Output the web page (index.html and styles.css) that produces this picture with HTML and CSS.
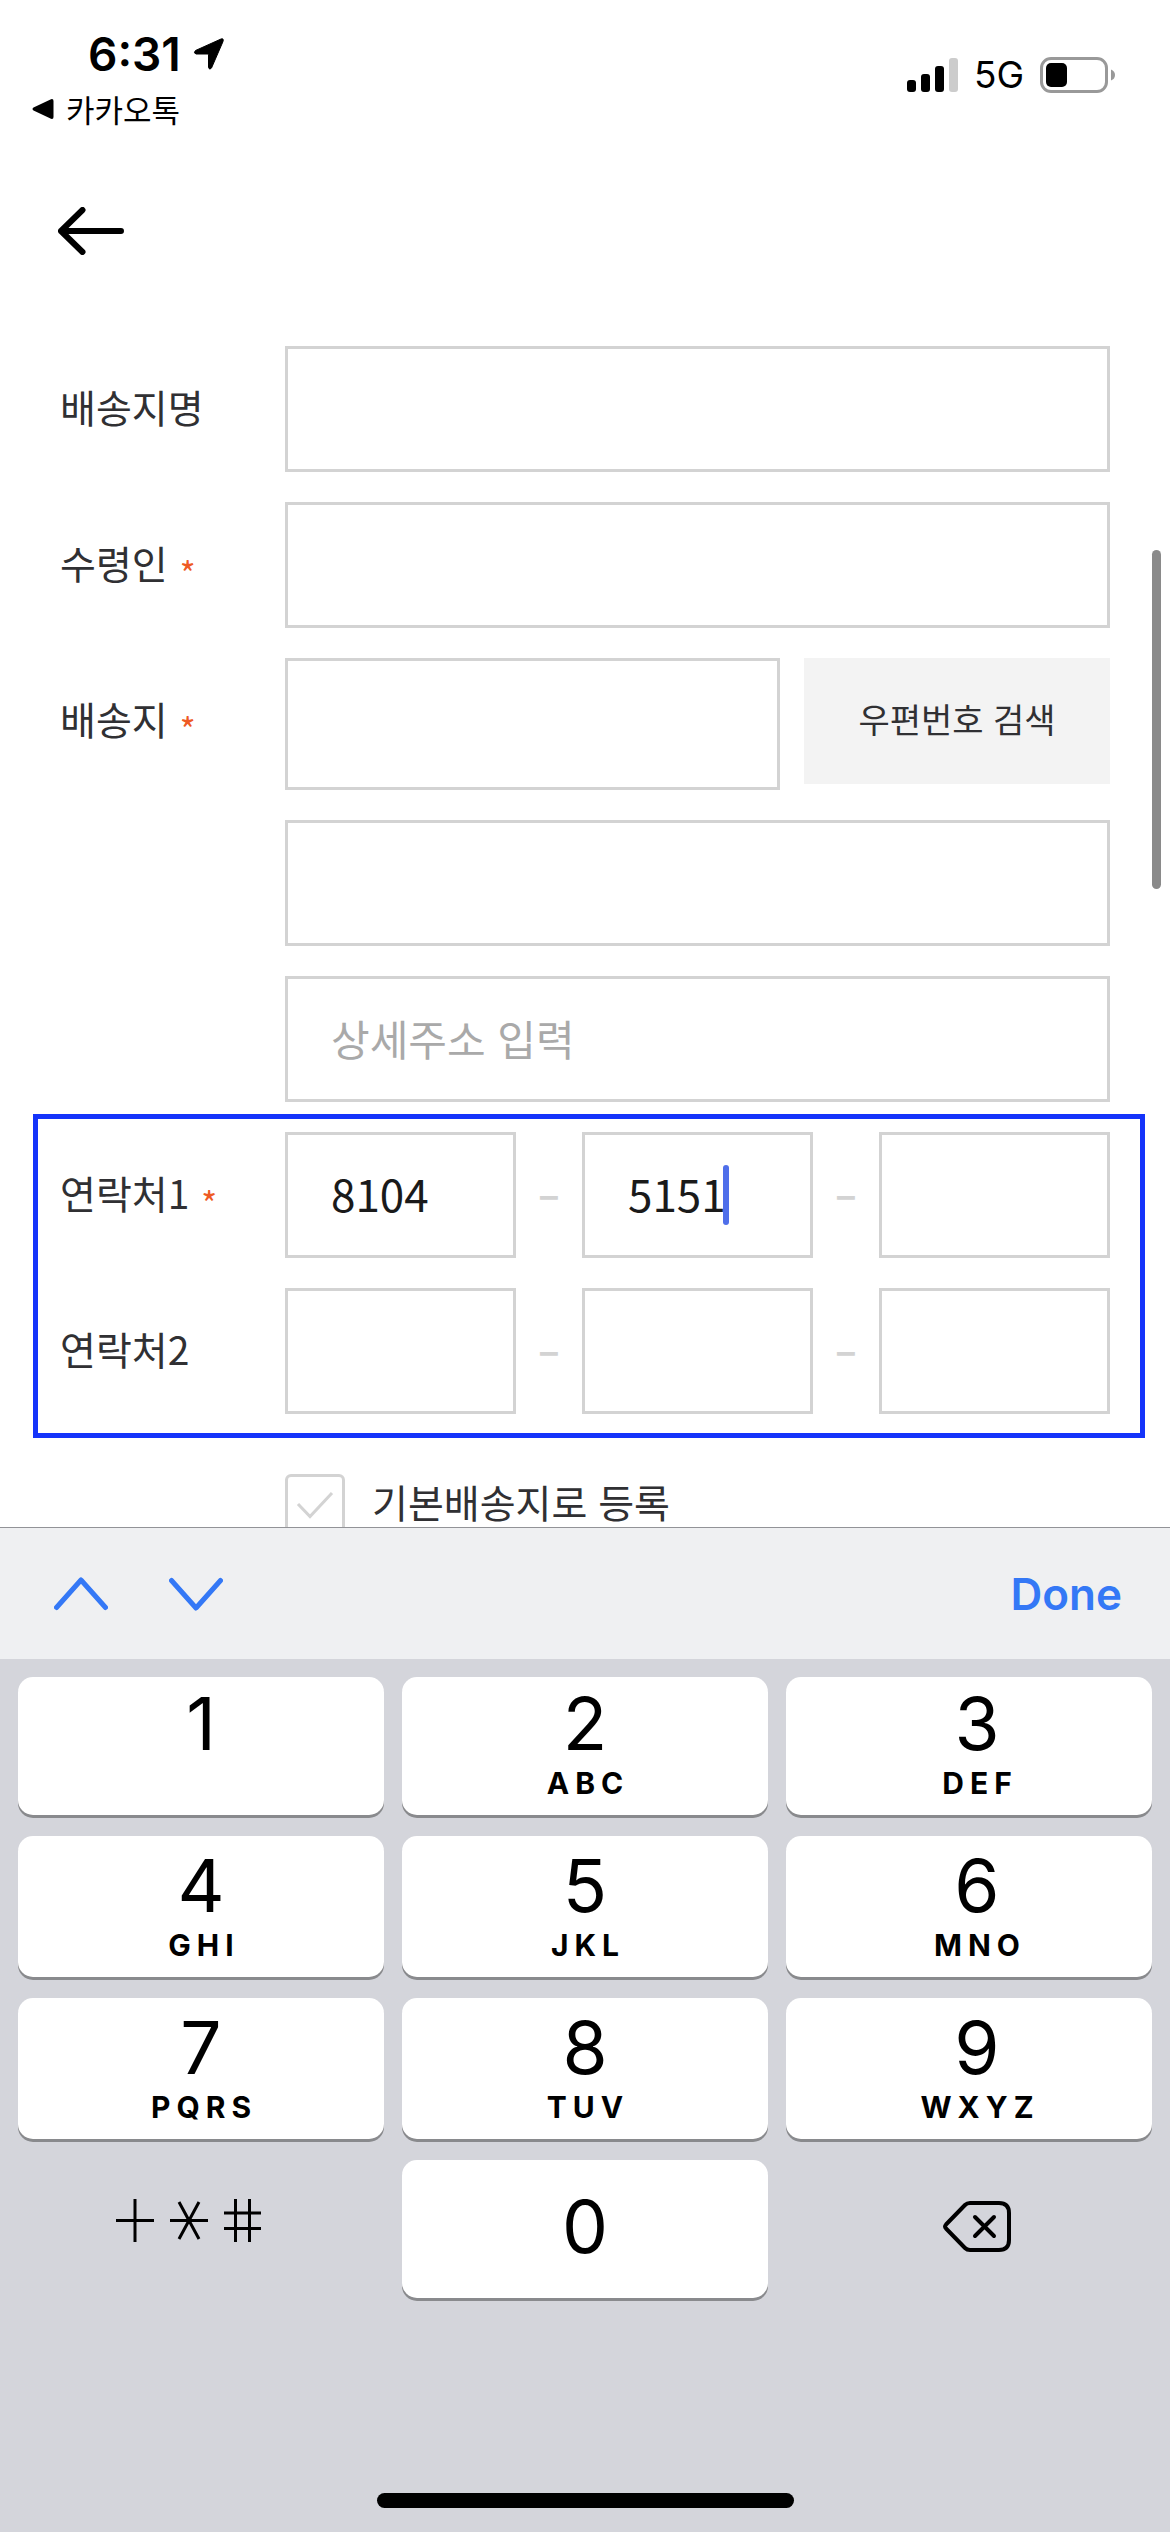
FILE: index.html
```html
<!DOCTYPE html>
<html lang="ko">
<head>
<meta charset="utf-8">
<meta name="viewport" content="width=device-width, initial-scale=1">
<title>배송지 등록</title>
<link rel="stylesheet" href="styles.css">
</head>
<body>
<header class="status-bar">
  <div class="status-left">
    <div class="clock">
      <span>6:31</span>
      <svg width="32" height="34" viewBox="0 0 32 34" stroke="#000" aria-hidden="true"><path d="M2.500 13.500 28 2Q31 1 30 4.500L18.500 31Q16.500 33.500 15.500 30.500V18Q15.500 17 14.500 17H3Q0 16 2.500 13.500Z"/></svg>
    </div>
    <a class="return-app" href="#">
      <svg width="22" height="22" viewBox="0 0 22 22" aria-hidden="true"><path d="M1.500 9.500 19 1.200Q21.500.5 21.500 3V19Q21.500 21.500 19 20.800L1.500 12.500Q-.5 11 1.500 9.500Z"/></svg>
      <span>카카오톡</span>
    </a>
  </div>
  <div class="status-right">
    <svg width="51" height="34" viewBox="0 0 51 34" aria-hidden="true"><rect y="22" width="9" height="12" rx="3"/><rect x="14" y="16" width="9" height="18" rx="3"/><rect x="28" y="8" width="9" height="26" rx="3"/><rect x="42" width="9" height="34" rx="3" fill="#ccc"/></svg>
    <span class="network">5G</span>
    <svg width="75" height="36" viewBox="0 0 75 36" aria-hidden="true"><rect x="1.500" y="1.500" width="65" height="33" rx="9.500" fill="none" stroke="#999" stroke-width="3"/><rect x="6" y="6" width="21" height="24" rx="5"/><path d="M71 12.500Q75 14 75 18T71 23.500Z" fill="#999"/></svg>
  </div>
</header>

<nav class="page-nav">
  <button class="back" type="button" aria-label="뒤로">
    <svg width="66" height="48" viewBox="0 0 66 48" fill="none" stroke="#000" stroke-width="6" stroke-linecap="round" stroke-linejoin="round" aria-hidden="true"><path d="M63 24H3M24.500 3 3 24 24.500 45"/></svg>
  </button>
</nav>

<main class="content">
  <form class="address-form" id="address">
    <div class="row">
      <label class="label" for="place">배송지명</label>
      <input class="field" id="place" type="text">
    </div>
    <div class="row">
      <label class="label" for="recipient">수령인<span class="required">*</span></label>
      <input class="field" id="recipient" type="text">
    </div>
    <div class="row">
      <label class="label" for="postcode">배송지<span class="required">*</span></label>
      <div class="stack">
        <div class="postcode">
          <input class="field field-tall" id="postcode" type="text">
          <button class="search" type="button">우편번호 검색</button>
        </div>
        <input class="field" type="text" aria-label="주소">
        <input class="field" type="text" aria-label="상세주소" placeholder="상세주소 입력">
      </div>
    </div>

    <div class="highlight">
      <div class="row">
        <label class="label" for="phone1">연락처1<span class="required">*</span></label>
        <div class="phone">
          <input class="field" id="phone1" type="tel" value="8104">
          <span class="dash">–</span>
          <div class="active-field">
            <input class="field" type="tel" value="5151" aria-label="연락처1 가운데 자리">
            <span class="caret"></span>
          </div>
          <span class="dash">–</span>
          <input class="field" type="tel" aria-label="연락처1 끝 자리">
        </div>
      </div>
      <div class="row">
        <label class="label" for="phone2">연락처2</label>
        <div class="phone">
          <input class="field" id="phone2" type="tel">
          <span class="dash">–</span>
          <input class="field" type="tel" aria-label="연락처2 가운데 자리">
          <span class="dash">–</span>
          <input class="field" type="tel" aria-label="연락처2 끝 자리">
        </div>
      </div>
    </div>

    <div class="row">
      <label class="default-option">
        <span class="tick">
          <input type="checkbox">
          <svg width="60" height="60" viewBox="0 0 60 60" fill="none" stroke="#d3d3d3" stroke-width="3" aria-hidden="true"><path d="M13 30 25 42.500 47 19"/></svg>
        </span>
        <span>기본배송지로 등록</span>
      </label>
    </div>
  </form>
  <div class="scroll-thumb"></div>
</main>

<section class="keyboard" aria-label="키보드">
  <div class="toolbar">
    <button type="button" aria-label="이전"><svg width="54" height="36" viewBox="0 0 54 36" aria-hidden="true"><path d="M2.500 31.500 27 4 51.500 31.500"/></svg></button>
    <button type="button" aria-label="다음"><svg width="54" height="36" viewBox="0 0 54 36" aria-hidden="true"><path d="M2.500 4.500 27 32 51.500 4.500"/></svg></button>
    <button class="done" type="button">Done</button>
  </div>
  <div class="keys">
    <button class="key" type="button"><span class="digit">1</span></button>
    <button class="key" type="button"><span class="digit">2</span><span class="letters">ABC</span></button>
    <button class="key" type="button"><span class="digit">3</span><span class="letters">DEF</span></button>
    <button class="key" type="button"><span class="digit">4</span><span class="letters">GHI</span></button>
    <button class="key" type="button"><span class="digit">5</span><span class="letters">JKL</span></button>
    <button class="key" type="button"><span class="digit">6</span><span class="letters">MNO</span></button>
    <button class="key" type="button"><span class="digit">7</span><span class="letters">PQRS</span></button>
    <button class="key" type="button"><span class="digit">8</span><span class="letters">TUV</span></button>
    <button class="key" type="button"><span class="digit">9</span><span class="letters">WXYZ</span></button>
    <button class="key-plain symbols" type="button" aria-label="기호">
      <svg width="145" height="43" viewBox="0 0 145 43" fill="none" stroke="#000" stroke-width="3" aria-hidden="true"><path d="M0 21.500H38M19 0V43M54 21.500H92M63 3 83 40M83 3 63 40M108 14H145M108 29.500H145M119.500 0V43M133.500 0V43"/></svg>
    </button>
    <button class="key key-zero" type="button"><span class="digit">0</span></button>
    <button class="key-plain delete" type="button" aria-label="지우기">
      <svg width="68" height="51" viewBox="0 0 68 51" fill="none" stroke="#000" stroke-linecap="round" stroke-linejoin="round" aria-hidden="true"><path stroke-width="4" d="M27 2H56Q66 2 66 12V39Q66 49 56 49H27Q24 49 22 47L3 27.500Q1.200 25.500 3 23.500L22 4Q24 2 27 2Z"/><path stroke-width="4" d="M32 16 51 35M51 16 32 35"/></svg>
    </button>
  </div>
  <div class="home-indicator"></div>
</section>
</body>
</html>
```
FILE: styles.css
```css
* {
  box-sizing: border-box;
}

body {
  margin: 0;
  height: 100vh;
  display: flex;
  flex-direction: column;
  overflow: hidden;
  background: #fff;
  color: #000;
  font-family: "Noto Sans CJK KR", "Noto Sans", sans-serif;
}

button,
input {
  font-family: inherit;
  border: 0;
  border-radius: 0;
  padding: 0;
  margin: 0;
  background: none;
  color: inherit;
}

svg {
  display: block;
  flex: none;
}

/* Status bar */
.status-bar {
  flex: none;
  display: flex;
  justify-content: space-between;
  align-items: flex-start;
  height: 132px;
  padding: 26px 55px 0 32px;
}

.status-left {
  display: flex;
  flex-direction: column;
  gap: 6px;
}

.clock {
  display: flex;
  align-items: center;
  gap: 12px;
  padding-left: 56px;
  font: 600 46px/56px Inter, sans-serif;
}

.return-app {
  display: flex;
  align-items: center;
  gap: 12px;
  color: inherit;
  text-decoration: none;
  font-size: 31px;
  line-height: 42px;
}

.status-right {
  display: flex;
  align-items: center;
  gap: 16px;
  padding-top: 30px;
}

.network {
  font: 400 37px/38px Inter, sans-serif;
}

/* Page navigation */
.page-nav {
  flex: none;
  padding: 75px 58px 91px;
}

.back {
  display: block;
}

/* Address form */
.content {
  position: relative;
  flex: 1;
  min-height: 0;
  overflow: hidden;
}

.address-form {
  display: flex;
  flex-direction: column;
  gap: 30px;
  padding: 0 25px 0 33px;
  color: #303033;
}

.row {
  display: grid;
  grid-template-columns: 225px 1fr;
  align-items: start;
  padding: 0 35px 0 27px;
}

.label {
  display: flex;
  align-items: flex-start;
  gap: 12px;
  font-size: 39px;
  line-height: 120px;
}

.required {
  padding-top: 54px;
  color: #ee5a24;
  font-size: 34px;
  line-height: 34px;
}

.field {
  width: 100%;
  min-width: 0;
  height: 126px;
  padding: 0 43px 4px;
  border: 3px solid #d3d3d3;
  color: #1a1a1a;
  font-size: 44px;
  outline: none;
}

.field::placeholder {
  color: #a9a9a9;
  font-size: 42px;
  opacity: 1;
}

.field-tall {
  height: 132px;
}

.stack {
  display: flex;
  flex-direction: column;
  gap: 30px;
}

.postcode {
  display: grid;
  grid-template-columns: 1fr 306px;
  gap: 24px;
}

.search {
  height: 126px;
  padding-bottom: 6px;
  background: #f3f3f3;
  font-size: 34px;
}

.highlight {
  display: flex;
  flex-direction: column;
  gap: 30px;
  margin-top: -18px;
  padding: 13px 0 19px;
  border: 5px solid #1433fa;
}

.highlight .row {
  padding: 0 30px 0 22px;
}

.phone {
  display: grid;
  grid-template-columns: 1fr 66px 1fr 66px 1fr;
  align-items: center;
}

.dash {
  padding-bottom: 6px;
  color: #d3d3d3;
  font-size: 40px;
  font-weight: 700;
  line-height: 40px;
  text-align: center;
}

.active-field {
  position: relative;
}

.caret {
  position: absolute;
  top: 33px;
  left: 141px;
  width: 6px;
  height: 60px;
  border-radius: 3px;
  background: #4f6fea;
}

.default-option {
  grid-column: 2;
  display: flex;
  align-items: flex-start;
  gap: 27px;
  margin-top: 6px;
  font-size: 39px;
  line-height: 54px;
}

.tick {
  display: grid;
}

.tick > * {
  grid-area: 1 / 1;
}

.tick input {
  appearance: none;
  width: 60px;
  height: 60px;
  border: 3px solid #d3d3d3;
  border-radius: 6px;
}

.scroll-thumb {
  position: absolute;
  top: 204px;
  right: 9px;
  width: 9px;
  height: 339px;
  border-radius: 5px;
  background: #8a8a8a;
}

/* On-screen keyboard */
.keyboard {
  flex: none;
  background: #d4d5db;
  font-family: Inter, sans-serif;
}

.toolbar {
  display: flex;
  align-items: center;
  gap: 61px;
  height: 132px;
  padding: 0 48px 0 54px;
  border-top: 1px solid #929397;
  background: #eff0f2;
}

.toolbar svg {
  fill: none;
  stroke: #3478f6;
  stroke-width: 5px;
  stroke-linecap: round;
  stroke-linejoin: round;
}

.done {
  margin-left: auto;
  color: #3478f6;
  font-size: 44px;
  font-weight: 600;
}

.keys {
  display: grid;
  grid-template-columns: repeat(3, 1fr);
  grid-template-rows: 138px 141px 141px 138px;
  gap: 21px 18px;
  padding: 18px;
}

.key {
  display: flex;
  flex-direction: column;
  align-items: center;
  gap: 5px;
  padding-top: 18px;
  border-radius: 15px;
  background: #fff;
  box-shadow: 0 3px 0 #898a8d;
}

.key:nth-child(-n + 3) {
  padding-top: 15px;
}

.key:nth-child(3n) {
  padding-left: 16px;
}

.digit {
  font-size: 73px;
  line-height: 64px;
}

.letters {
  padding-left: 6px;
  font-size: 30px;
  font-weight: 700;
  line-height: 44px;
  letter-spacing: 6px;
}

.key-zero {
  justify-content: center;
  padding: 0 0 4px;
}

.key-plain {
  display: flex;
  align-items: center;
  justify-content: center;
}

.symbols {
  padding: 0 26px 18px 0;
}

.delete {
  padding: 0 0 6px 16px;
}

.home-indicator {
  width: 417px;
  height: 15px;
  margin: 177px auto 24px;
  border-radius: 8px;
  background: #000;
}
```
